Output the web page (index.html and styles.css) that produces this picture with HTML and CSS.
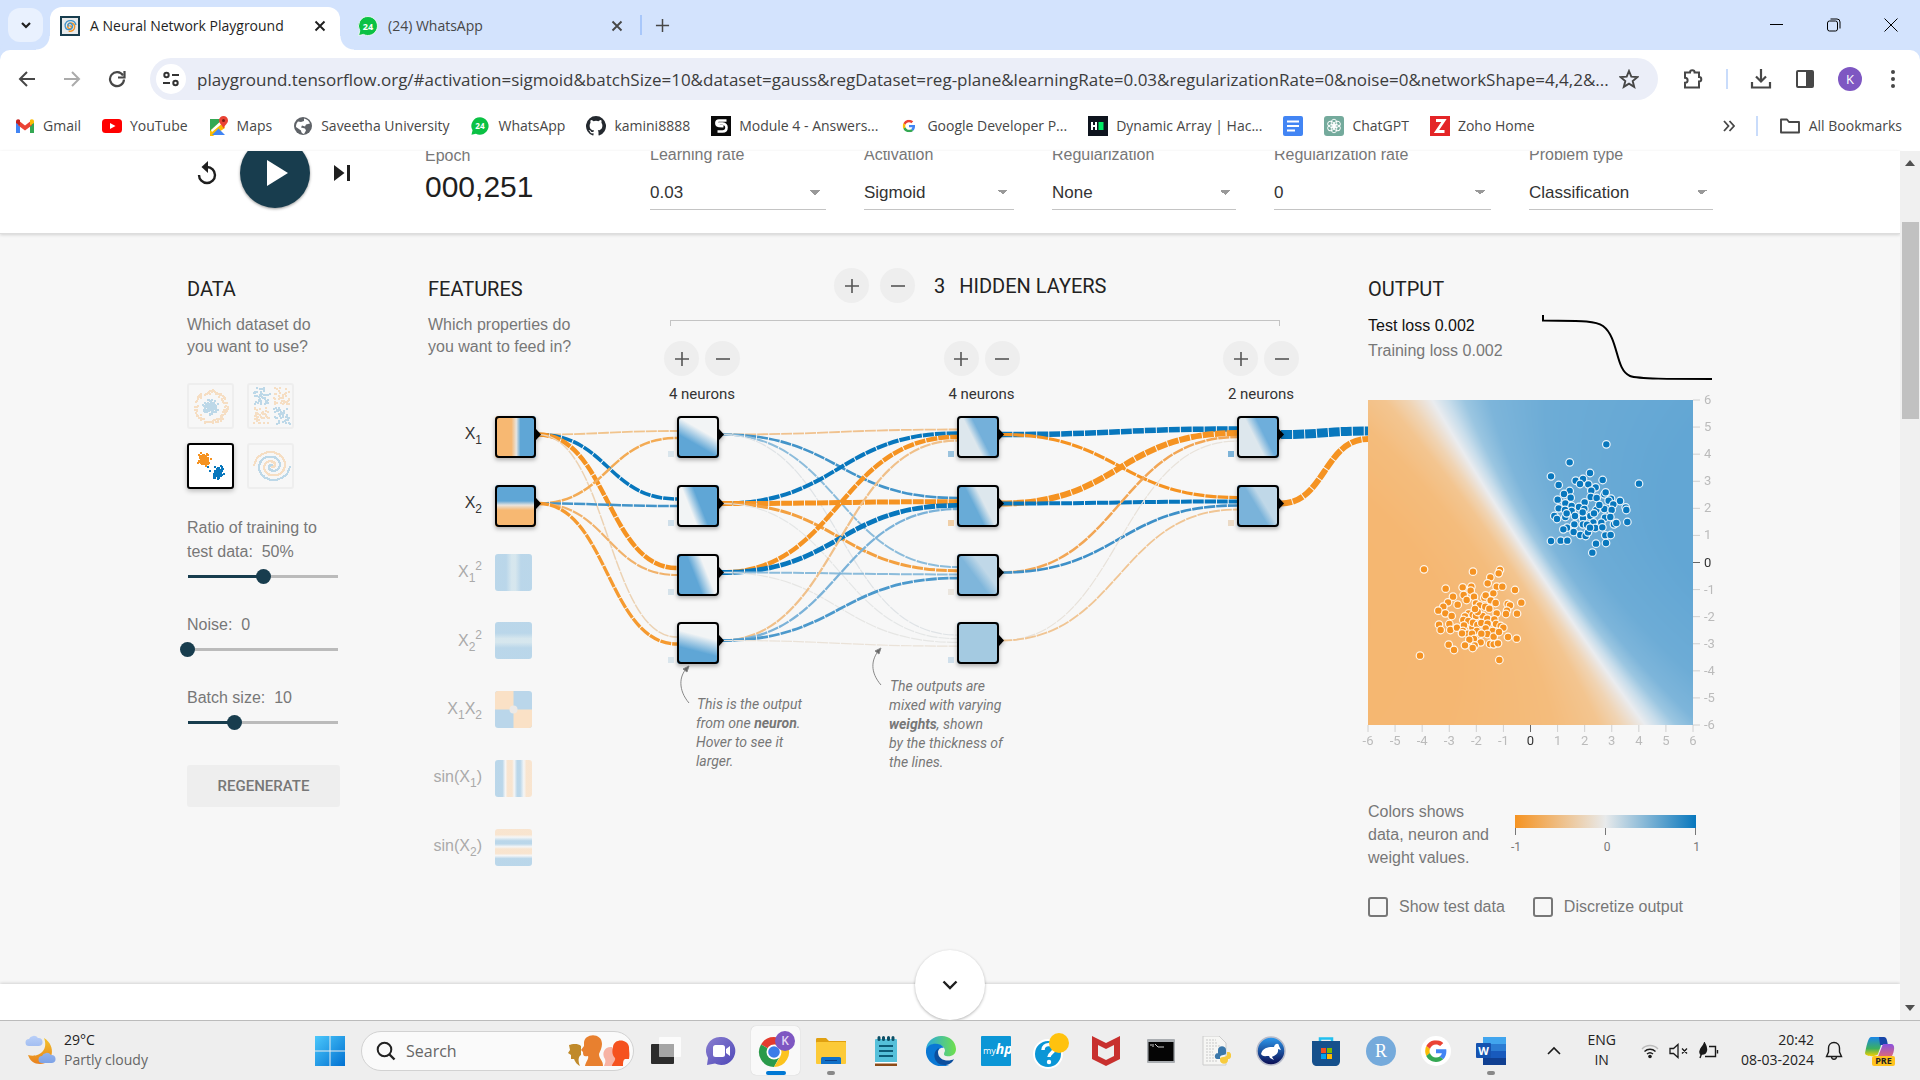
FILE: index.html
```html
<!DOCTYPE html>
<html lang="en">
<head>
<meta charset="utf-8">
<title>A Neural Network Playground</title>
<link rel="stylesheet" href="styles.css">
</head>
<body>
<svg class="defs" aria-hidden="true">
  <symbol id="i-close" viewBox="0 0 14 14"><path d="M2.500 2.500l9 9M11.500 2.500l-9 9" stroke="currentColor" stroke-width="1.900" fill="none"/></symbol>
  <symbol id="i-plus" viewBox="0 0 16 16"><path d="M8 1v14M1 8h14" stroke="currentColor" stroke-width="1.600" fill="none"/></symbol>
  <symbol id="i-minus" viewBox="0 0 16 16"><path d="M1 8h14" stroke="currentColor" stroke-width="1.600" fill="none"/></symbol>
  <symbol id="i-google" viewBox="0 0 48 48"><path fill="#ea4335" d="M24 9.500c3.500 0 6.700 1.200 9.200 3.600l6.900-6.900A24 24 0 0 0 2.600 13.200l8 6.200C12.400 13.700 17.700 9.500 24 9.500z"/><path fill="#4285f4" d="M47 24.600c0-1.600-.2-3.100-.4-4.600H24v9h12.900c-.6 3-2.300 5.500-4.800 7.200l7.700 6C44.400 38 47 31.800 47 24.600z"/><path fill="#fbbc05" d="M10.500 28.600a14.500 14.500 0 0 1 0-9.200l-8-6.200a24 24 0 0 0 0 21.600z"/><path fill="#34a853" d="M24 48c6.500 0 11.900-2.100 15.900-5.800l-7.700-6c-2.200 1.500-4.900 2.300-8.200 2.300-6.300 0-11.600-4.200-13.500-9.900l-8 6.200C6.500 42.600 14.600 48 24 48z"/></symbol>
</svg>

<header class="browser">
  <div class="tabstrip">
    <button class="tab-search" aria-label="Search tabs"><svg width="12" height="12" viewBox="0 0 12 12"><path d="M2 4l4 4 4-4" fill="none" stroke="#1f1f1f" stroke-width="2.200"/></svg></button>
    <div class="tab tab-active">
      <svg width="20" height="20" viewBox="0 0 20 20"><rect width="20" height="20" fill="#183d4e"/><rect x="2" y="2" width="16" height="16" fill="#e8eaeb"/><path d="M10 10.500c1-1.500 2.500.5 1 1.700-1.800 1.400-4.300-.8-3-3.400 1.600-3 6.500-2 6.700 1.700.2 3.500-3 5.500-6 4.500" fill="none" stroke="#f59322" stroke-width="1.400"/><path d="M9.500 9.500c-1 1.500-2.500-.5-1-1.700 1.800-1.400 4.800.5 4 3.400-1 3.400-6.500 3.300-7.300-.7-.7-4 2.800-6.500 6.300-5.800 2.500.5 4 2.300 4.500 4.300" fill="none" stroke="#4394c9" stroke-width="1.300"/></svg>
      <span class="tab-title">A Neural Network Playground</span>
      <button class="tab-close" aria-label="Close tab"><svg width="14" height="14"><use href="#i-close"/></svg></button>
    </div>
    <div class="tab">
      <svg width="20" height="20" viewBox="0 0 20 20"><path d="M10 .5a9.500 9.500 0 1 1-4.500 17.900L.6 19.600l1.200-4.800A9.500 9.500 0 0 1 10 .5z" fill="#0bc144" stroke="#fff" stroke-width=".8"/><text x="10" y="13.500" text-anchor="middle" class="wa-count">24</text></svg>
      <span class="tab-title">(24) WhatsApp</span>
      <button class="tab-close" aria-label="Close tab"><svg width="14" height="14"><use href="#i-close"/></svg></button>
    </div>
    <span class="divider divider-tab"></span>
    <button class="new-tab" aria-label="New tab"><svg width="15" height="15"><use href="#i-plus"/></svg></button>
    <div class="window-controls">
      <button aria-label="Minimize"><svg width="14" height="14" viewBox="0 0 14 14"><path d="M0 6.500h13" stroke="#000"/></svg></button>
      <button aria-label="Restore"><svg width="14" height="14" viewBox="0 0 14 14"><rect x=".5" y="3" width="10" height="10" rx="2" fill="none" stroke="#000"/><path d="M3.500 1h6.500a3 3 0 0 1 3 3v6.500" fill="none" stroke="#000"/></svg></button>
      <button aria-label="Close"><svg width="14" height="14" viewBox="0 0 14 14"><path d="M.5.5l13 13M13.500.5l-13 13" stroke="#000"/></svg></button>
    </div>
  </div>

  <div class="toolbar">
    <div class="nav">
      <button aria-label="Back"><svg width="18" height="18" viewBox="0 0 18 18"><path d="M17 9H2.500M9 2L2 9l7 7" fill="none" stroke="#474747" stroke-width="2"/></svg></button>
      <button aria-label="Forward"><svg width="18" height="18" viewBox="0 0 18 18"><path d="M1 9h14.500M9 2l7 7-7 7" fill="none" stroke="#ababab" stroke-width="2"/></svg></button>
      <button aria-label="Reload"><svg width="18" height="18" viewBox="0 0 18 18"><path d="M15 5.500A7 7 0 1 0 16 9.500" fill="none" stroke="#474747" stroke-width="2.200"/><path d="M16.500 1v6.500H10" fill="none" stroke="#474747" stroke-width="2.200"/></svg></button>
    </div>
    <div class="omnibox">
      <span class="site-info"><svg width="18" height="18" viewBox="0 0 18 18" fill="none" stroke="#333" stroke-width="2"><circle cx="4.500" cy="5" r="2.200"/><path d="M10 5h7M1 13h7"/><circle cx="13.500" cy="13" r="2.200"/></svg></span>
      <input class="url" aria-label="Address" value="playground.tensorflow.org/#activation=sigmoid&amp;batchSize=10&amp;dataset=gauss&amp;regDataset=reg-plane&amp;learningRate=0.03&amp;regularizationRate=0&amp;noise=0&amp;networkShape=4,4,2&amp;...">
      <svg width="20" height="20" viewBox="0 0 20 20"><path d="M10 2l2.300 5.600 6 .5-4.600 3.900 1.500 5.900L10 14.700l-5.200 3.200L6.300 12 1.700 8.100l6-.5z" fill="none" stroke="#474747" stroke-width="1.900"/></svg>
    </div>
    <div class="actions">
      <svg width="22" height="22" viewBox="0 0 22 22"><path d="M3 4.500h5a2.300 2.300 0 0 1 4.600 0H17V9a2.300 2.300 0 0 1 0 4.600V19.500H3v-4.800c3.500 0 3.500-5 0-5z" fill="none" stroke="#474747" stroke-width="2"/></svg>
      <span class="divider"></span>
      <svg width="22" height="22" viewBox="0 0 22 22"><path d="M11 1v12M6 8.500l5 5 5-5M2 14v5.500h18V14" fill="none" stroke="#474747" stroke-width="2.200"/></svg>
      <svg width="22" height="20" viewBox="0 0 22 20"><rect x="3" y="2" width="16" height="16" rx="1" fill="none" stroke="#474747" stroke-width="2"/><path d="M12 2h7v16h-7z" fill="#474747"/></svg>
      <span class="avatar">K</span>
      <svg width="6" height="20" viewBox="0 0 6 20" fill="#474747"><circle cx="3" cy="3" r="2"/><circle cx="3" cy="10" r="2"/><circle cx="3" cy="17" r="2"/></svg>
    </div>
  </div>

  <nav class="bookmarks">
    <a href="#"><svg width="20" height="20" viewBox="0 0 20 20"><path fill="#4285f4" d="M1 17V6l4 3v8z"/><path fill="#34a853" d="M15 17V9l4-3v11z"/><path fill="#ea4335" d="M3 4l7 5.500L17 4v5.200l-7 5.300-7-5.300z"/><path fill="#c5221f" d="M1 5.500C1 3 3.500 2.500 5 4v5.500L1 7z"/><path fill="#fbbc04" d="M19 5.500C19 3 16.500 2.500 15 4v5.500L19 7z"/></svg>Gmail</a>
    <a href="#"><svg width="20" height="20" viewBox="0 0 20 20"><rect y="3" width="20" height="14" rx="3.500" fill="#f00"/><path d="M8 7l5.500 3L8 13z" fill="#fff"/></svg>YouTube</a>
    <a href="#"><svg width="20" height="20" viewBox="0 0 20 20"><path fill="#34a853" d="M1 3h11v8l-6 7H1z"/><path fill="#fbbc04" d="M1 15L13 4l3 8-3 2L4 20H1z"/><path fill="#fff" d="M2 14L13 4l2 2L3 16z"/><path fill="#4285f4" d="M3 19l6.500-6.500L16 19z"/><path fill="#ea4335" d="M14.500 0a4.500 4.500 0 0 1 4.500 4.500c0 3-3 4-4.500 8-1.500-4-4.500-5-4.500-8A4.500 4.500 0 0 1 14.500 0z"/><circle cx="14.500" cy="4.500" r="1.500" fill="#7d1e16"/></svg>Maps</a>
    <a href="#"><svg width="20" height="20" viewBox="0 0 20 20"><circle cx="10" cy="10" r="9" fill="#5f6368"/><path fill="#fff" d="M11 2.500c3 .5 5 2.500 6 5l-4 1-1 2-3-1-1 2 4 1 1 2-2 3.500c-2-.5-3-2-3-3.500L3 11c0-2 .5-4 2-5.500l3 .5 3-1z"/></svg>Saveetha University</a>
    <a href="#"><svg width="20" height="20" viewBox="-1 -1 22 22"><path d="M10 .5a9.500 9.500 0 1 1-4.500 17.900L.6 19.600l1.200-4.800A9.500 9.500 0 0 1 10 .5z" fill="#0bc144"/><text x="10" y="13.500" text-anchor="middle" class="wa-count">24</text></svg>WhatsApp</a>
    <a href="#"><svg width="20" height="20" viewBox="0 0 16 16"><path fill="#24292f" d="M8 0a8 8 0 0 0-2.500 15.600c.4.100.5-.2.500-.4v-1.400c-2.200.5-2.700-1-2.700-1-.4-.9-.9-1.200-.9-1.200-.7-.5.100-.5.100-.5.800.1 1.200.8 1.200.8.700 1.300 1.900.9 2.300.7.100-.5.300-.9.500-1.100-1.800-.2-3.600-.9-3.600-4 0-.9.300-1.600.8-2.100-.1-.2-.4-1 .1-2.100 0 0 .7-.2 2.200.8a7.500 7.500 0 0 1 4 0c1.500-1 2.200-.8 2.200-.8.400 1.100.2 1.900.1 2.100.5.600.8 1.300.8 2.100 0 3.100-1.900 3.800-3.700 4 .3.300.6.800.6 1.500v2.200c0 .2.100.5.500.4A8 8 0 0 0 8 0z"/></svg>kamini8888</a>
    <a href="#"><svg width="20" height="20" viewBox="0 0 20 20"><rect width="20" height="20" fill="#0a0a0a"/><path d="M15.500 4.500H8C4.500 4.500 4.500 9.500 8 10l4.500.3M7.500 9.500V7.500h4c3.500.5 4 2.500 4 4 0 2.500-1.500 4-4 4H6.500" fill="none" stroke="#fff" stroke-width="2.600"/></svg>Module 4 - Answers...</a>
    <a href="#"><svg width="20" height="20" viewBox="-14 -14 76 76"><use href="#i-google" width="48" height="48"/></svg>Google Developer P...</a>
    <a href="#"><svg width="20" height="20" viewBox="0 0 20 20"><rect width="20" height="20" fill="#0e141e"/><path d="M4 6v8M8 6v8M4 10h4" stroke="#fff" stroke-width="2"/><rect x="10.500" y="6" width="5" height="8" fill="#00ea64"/></svg>Dynamic Array | Hac...</a>
    <a href="#" aria-label="Google Docs"><svg width="20" height="20" viewBox="0 0 20 20"><rect width="20" height="20" rx="2" fill="#4285f4"/><path d="M4 5.500h12M4 10h12M4 14.500h8" stroke="#fff" stroke-width="1.800"/></svg></a>
    <a href="#"><svg width="20" height="20" viewBox="0 0 20 20"><rect width="20" height="20" rx="3" fill="#74aa9c"/><g fill="none" stroke="#fff" stroke-width=".9"><ellipse cx="10" cy="7" rx="2.800" ry="3.800"/><ellipse cx="10" cy="7" rx="2.800" ry="3.800" transform="rotate(60 10 10)"/><ellipse cx="10" cy="7" rx="2.800" ry="3.800" transform="rotate(120 10 10)"/><ellipse cx="10" cy="7" rx="2.800" ry="3.800" transform="rotate(180 10 10)"/><ellipse cx="10" cy="7" rx="2.800" ry="3.800" transform="rotate(240 10 10)"/><ellipse cx="10" cy="7" rx="2.800" ry="3.800" transform="rotate(300 10 10)"/></g></svg>ChatGPT</a>
    <a href="#"><svg width="20" height="20" viewBox="0 0 20 20"><rect width="20" height="20" fill="#e42527"/><path d="M6 4.500h8L6.500 15.500h8" fill="none" stroke="#fff" stroke-width="2.800"/></svg>Zoho Home</a>
    <div class="bookmarks-end">
      <svg width="12" height="12" viewBox="0 0 12 12"><path d="M1 1l4.500 5L1 11M6.500 1L11 6l-4.500 5" fill="none" stroke="#474747" stroke-width="1.800"/></svg>
      <span class="divider"></span>
      <a href="#"><svg width="22" height="20" viewBox="0 0 22 20"><path d="M2 16.500V3.500h6l2 2.500h10v10.500z" fill="none" stroke="#474747" stroke-width="1.900" stroke-linejoin="round"/></svg>All Bookmarks</a>
    </div>
  </nav>
</header>

<div class="viewport">
  <main class="page">
    <section class="top-controls">
      <div class="wrap controls">
        <div class="timeline">
          <button aria-label="Reset"><svg width="22" height="26" viewBox="0 0 22 26"><path d="M3 15a8 8 0 1 0 8-8" fill="none" stroke="#1f1f1f" stroke-width="2.400"/><path d="M12 1v12L5.500 7z" fill="#1f1f1f"/></svg></button>
          <button class="play" aria-label="Run"><svg width="24" height="28" viewBox="0 0 24 28"><path d="M2 1l21 13L2 27z" fill="#fff"/></svg></button>
          <button aria-label="Step"><svg width="16" height="16" viewBox="0 0 16 16"><path d="M0 0l10.500 8L0 16zM13 0h3v16h-3z" fill="#1f1f1f"/></svg></button>
        </div>
        <div class="epoch"><span class="label">Epoch</span><span class="epoch-value">000,251</span></div>
        <div class="fields">
          <label class="field f1"><span class="label">Learning rate</span><select><option>0.03</option></select></label>
          <label class="field f2"><span class="label">Activation</span><select><option>Sigmoid</option></select></label>
          <label class="field f3"><span class="label">Regularization</span><select><option>None</option></select></label>
          <label class="field f4"><span class="label">Regularization rate</span><select><option>0</option></select></label>
          <label class="field f5"><span class="label">Problem type</span><select><option>Classification</option></select></label>
        </div>
      </div>
    </section>

    <section class="wrap playground">
      <div class="data">
        <h4>Data</h4>
        <p>Which dataset do<br>you want to use?</p>
        <div class="datasets">
          <button aria-label="Circle"><svg id="ds-circle" viewBox="0 0 43 42"></svg></button>
          <button aria-label="Exclusive or"><svg id="ds-xor" viewBox="0 0 43 42"></svg></button>
          <button class="selected" aria-label="Gaussian"><svg id="ds-gauss" viewBox="0 0 43 42"></svg></button>
          <button aria-label="Spiral"><svg id="ds-spiral" viewBox="0 0 43 42"></svg></button>
        </div>
        <div class="slider"><label for="ratio">Ratio of training to<br>test data:&nbsp; 50%</label><input id="ratio" type="range" min="0" max="100" value="50" style="--fill:50%"></div>
        <div class="slider"><label for="noise">Noise:&nbsp; 0</label><input id="noise" type="range" min="0" max="50" value="0" style="--fill:0%"></div>
        <div class="slider"><label for="batch">Batch size:&nbsp; 10</label><input id="batch" type="range" min="1" max="30" value="10" style="--fill:31%"></div>
        <button class="regenerate">Regenerate</button>
      </div>

      <div class="network">
        <div class="network-head">
          <div class="features">
            <h4>Features</h4>
            <p>Which properties do<br>you want to feed in?</p>
          </div>
          <div class="layers">
            <div class="layers-title">
              <button class="round" aria-label="Add layer"><svg width="16" height="16"><use href="#i-plus"/></svg></button>
              <button class="round" aria-label="Remove layer"><svg width="16" height="16"><use href="#i-minus"/></svg></button>
              <span class="count">3</span><h4>Hidden layers</h4>
            </div>
            <div class="bracket"></div>
            <div class="layer-row">
              <div class="layer"><button class="round" aria-label="Add neuron"><svg width="16" height="16"><use href="#i-plus"/></svg></button><button class="round" aria-label="Remove neuron"><svg width="16" height="16"><use href="#i-minus"/></svg></button><span>4 neurons</span></div>
              <div class="layer"><button class="round" aria-label="Add neuron"><svg width="16" height="16"><use href="#i-plus"/></svg></button><button class="round" aria-label="Remove neuron"><svg width="16" height="16"><use href="#i-minus"/></svg></button><span>4 neurons</span></div>
              <div class="layer"><button class="round" aria-label="Add neuron"><svg width="16" height="16"><use href="#i-plus"/></svg></button><button class="round" aria-label="Remove neuron"><svg width="16" height="16"><use href="#i-minus"/></svg></button><span>2 neurons</span></div>
            </div>
          </div>
        </div>
        <svg class="diagram" id="diagram" viewBox="428 404 940 475">
          <g class="callout">
            <path d="M689 703C678 690 679 676 687 668" /><path class="tip" d="M689 666l-6 3 4 3z"/>
            <text x="697" y="709">This is the output</text><text x="696" y="728">from one <tspan class="b">neuron</tspan>.</text><text x="696" y="747">Hover to see it</text><text x="696" y="766">larger.</text>
            <path d="M881 685C870 672 871 660 879 650" /><path class="tip" d="M881 648l-6 3 4 3z"/>
            <text x="890" y="691">The outputs are</text><text x="889" y="710">mixed with varying</text><text x="889" y="729"><tspan class="b">weights</tspan>, shown</text><text x="889" y="748">by the thickness of</text><text x="889" y="767">the lines.</text>
          </g>
        </svg>
      </div>

      <div class="output">
        <h4>Output</h4>
        <div class="loss">
          <div><span class="test">Test loss 0.002</span><span>Training loss 0.002</span></div>
          <svg width="172" height="68" viewBox="0 0 172 68"><path d="M2 0v5.500C35 6 53 5 62 11 78 23 74 55 89 61c8 3 40 3 82 3" fill="none" stroke="#000" stroke-width="2"/></svg>
        </div>
        <div class="chart"><canvas id="heat" width="325" height="325"></canvas><svg id="plot" viewBox="0 0 345 350"></svg></div>
        <div class="legend">
          <p>Colors shows<br>data, neuron and<br>weight values.</p>
          <div class="scale"><div class="bar"></div><div class="marks"><i></i><i></i><i></i></div><div class="nums"><span>-1</span><span>0</span><span>1</span></div></div>
        </div>
        <div class="checks">
          <label><input type="checkbox">Show test data</label>
          <label><input type="checkbox">Discretize output</label>
        </div>
      </div>
    </section>

    <section class="article">
      <button class="more" aria-label="Scroll down"><svg width="16" height="10" viewBox="0 0 16 10"><path d="M1.500 1.500L8 8l6.500-6.500" fill="none" stroke="#1f1f1f" stroke-width="2.400"/></svg></button>
    </section>
  </main>
  <div class="scrollbar">
    <svg width="10" height="6" viewBox="0 0 10 6"><path d="M0 6l5-6 5 6z" fill="#505050"/></svg>
    <div class="thumb"></div>
    <svg width="10" height="6" viewBox="0 0 10 6"><path d="M0 0l5 6 5-6z" fill="#505050"/></svg>
  </div>
</div>

<footer class="taskbar">
  <div class="weather">
    <svg width="32" height="36" viewBox="0 0 32 36"><defs><linearGradient id="moon" x2="0" y2="1"><stop stop-color="#f3c32c"/><stop offset="1" stop-color="#e8801e"/></linearGradient><linearGradient id="cloud" x2="0" y2="1"><stop stop-color="#b9cff8"/><stop offset="1" stop-color="#7da2e6"/></linearGradient></defs><path d="M19 5c13 8 9 26-4 26-6 0-10-3-12-9 10 3 21-4 16-17z" fill="url(#moon)"/><path d="M4 13a3.500 3.500 0 0 1 0-7 5 4.500 0 0 1 9-1 4 4 0 0 1 1 8zM17 30a3.500 3.500 0 0 1 0-7 5 4.500 0 0 1 9-1 4 4 0 0 1 1 8z" fill="url(#cloud)"/></svg>
    <div><span>29°C</span><span class="muted">Partly cloudy</span></div>
  </div>
  <div class="apps">
    <button class="start" aria-label="Start"><svg width="30" height="30" viewBox="0 0 30 30"><defs><linearGradient id="win" x2="1" y2="1"><stop stop-color="#4cc8fb"/><stop offset="1" stop-color="#0070d1"/></linearGradient></defs><path d="M0 0h14.500v14.500H0zM15.500 0H30v14.500H15.500zM0 15.500h14.500V30H0zM15.500 15.500H30V30H15.500z" fill="url(#win)"/></svg></button>
    <div class="search">
      <svg width="20" height="20" viewBox="0 0 20 20"><circle cx="8.500" cy="8.500" r="6.800" fill="none" stroke="#222" stroke-width="2"/><path d="M13.500 13.500l5 5" stroke="#222" stroke-width="2.400"/></svg>
      <input aria-label="Search" placeholder="Search">
      <svg width="64" height="32" viewBox="0 0 64 32"><path d="M2 10c3-1 9-2 12 1v9c-3 2-3 6-1 11-4-2-5-5-6-7H4v-4l-3-2 2-3z" fill="#c08a2a"/><path d="M37 31c1-3 2-4 1-7-4-6 0-13 7-12l4 8-1 11z" fill="#f7b3a4"/><path d="M17 8c0-10 18-11 18 1 0 4-2 7-3 10 0 5 4 6 4 12H18c1-5 4-7 3-10-4 1-5 0-5-4l-2-2 3-4z" fill="#e8802f"/><path d="M46 12c1-9 15-8 16 0 0 5 1 7 0 12h-4c-2 1-2 3-2 7H45c0-3 4-5 3-8-3-3-3-7-2-11z" fill="#f5521f"/></svg>
    </div>
    <button class="app" aria-label="Task view"><svg width="30" height="30" viewBox="0 0 30 30"><rect y="8" width="23" height="20" rx="1" fill="#2c2c2c"/><rect x="8" y="1" width="22" height="20" rx="1" fill="#fff" opacity=".78"/><rect x="8" y="8" width="15" height="13" fill="#8d8d8d" opacity=".65"/></svg></button>
    <button class="app" aria-label="Chat"><svg width="30" height="30" viewBox="0 0 30 30"><defs><linearGradient id="chat" x2="1" y2="1"><stop stop-color="#8a7fd0"/><stop offset="1" stop-color="#4f48b8"/></linearGradient></defs><path d="M15 1a14 14 0 1 1-6 26.500L1 29l1-7A14 14 0 0 1 15 1z" fill="url(#chat)"/><rect x="7" y="9" width="12" height="12" rx="2.500" fill="#fff"/><path d="M20 13l4-3v10l-4-3z" fill="#fff"/></svg></button>
    <button class="app active" aria-label="Chrome"><svg width="38" height="40" viewBox="0 0 38 40"><path d="M17 24L4 16.500a15 15 0 0 1 26 0z" fill="#e33b2e"/><path d="M17 24L4 16.500A15 15 0 0 0 17 39l6-11z" fill="#2a9a4a"/><path d="M17 24l0-7.500h13A15 15 0 0 1 17 39l6.500-11z" fill="#fcc31e"/><circle cx="17" cy="24" r="7.500" fill="#fff"/><circle cx="17" cy="24" r="5.800" fill="#3b7de8"/><circle cx="28" cy="13" r="10" fill="#7e57c2"/><text x="28" y="17" text-anchor="middle" class="badge-k">K</text></svg></button>
    <button class="app running" aria-label="File Explorer"><svg width="30" height="30" viewBox="0 0 30 30"><path d="M0 3c0-1 1-1 2-1h8l3 3h17v5H0z" fill="#e0a010"/><rect y="6" width="30" height="22" rx="1" fill="#fcca38"/><path d="M5 28v-5c0-2 1-2 2-2h16c2 0 2 1 2 2v5z" fill="#0f70c8"/><path d="M9 24.500h12" stroke="#0a3f87"/></svg></button>
    <button class="app" aria-label="Notepad"><svg width="30" height="30" viewBox="0 0 30 30"><rect x="4" y="3" width="22" height="25" rx="1" fill="#55c0da"/><path d="M4 27h22v3H4z" fill="#8b4a17"/><path d="M4 26h22v1.500H4z" fill="#fff"/><path d="M8 10h14M8 15h14M8 20h14" stroke="#0d5c78" stroke-width="2"/><path d="M8 1.500v2M12.500 1.500v2M17.500 1.500v2M22 1.500v2" stroke="#0d4f66" stroke-width="3" stroke-linecap="round"/></svg></button>
    <button class="app" aria-label="Edge"><svg width="30" height="30" viewBox="0 0 30 30"><defs><linearGradient id="edge" x2="1"><stop stop-color="#2aa8e0"/><stop offset="1" stop-color="#6fe04a"/></linearGradient></defs><path d="M0 14C1-4 29-5 30 13c0 6-5 8-10 7-3-1-2-3-1-5 0-8-15-9-19-1z" fill="url(#edge)"/><path d="M0 14c2-8 15-8 18-2-5-1-8 4-6 9 2 7 8 9 12 8C10 34-1 25 0 14z" fill="#0a78d4"/><path d="M13 12c-8 4-5 17 5 17 5 0 8-2 10-6-5 3-16 2-16-7 0-2 1-3 1-4z" fill="#0c4f9e"/></svg></button>
    <button class="app" aria-label="myHP"><svg width="30" height="30" viewBox="0 0 30 30"><rect width="30" height="30" rx="1" fill="#0b96d6"/><text x="2" y="18" class="myhp">my<tspan class="hp">hp</tspan></text></svg></button>
    <button class="app" aria-label="Help"><svg width="36" height="40" viewBox="0 0 36 40"><circle cx="15" cy="23" r="14" fill="#0b96d6" stroke="#fff" stroke-width="2"/><path d="M10 19c0-7 11-7 11-1 0 4-5 4-5 8" fill="none" stroke="#fff" stroke-width="3.500"/><circle cx="16" cy="31" r="2.200" fill="#fff"/><circle cx="26" cy="12" r="10" fill="#ffc20e"/></svg></button>
    <button class="app" aria-label="McAfee"><svg width="28" height="30" viewBox="0 0 28 30"><path d="M0 0l14 7 14-7v23l-14 7-14-7zM6 9v11l8 4 8-4V9l-8 4z" fill="#c8302e" fill-rule="evenodd"/></svg></button>
    <button class="app" aria-label="Command Prompt"><svg width="28" height="24" viewBox="0 0 28 24"><rect width="28" height="24" rx="1" fill="#a9adb1"/><rect x="1.500" y="3" width="25" height="19" fill="#050505"/><path d="M3 6h2M6 5v3M8 5l3 3M11 8h6" stroke="#ccc"/></svg></button>
    <button class="app" aria-label="Python"><svg width="30" height="30" viewBox="0 0 30 30"><path d="M2 0h16l7 7v22H2z" fill="#f6f6f4" stroke="#ccc"/><path d="M5 4h10M5 7h12M5 10h14M5 13h9M5 16h7M5 19h8M5 22h8M5 25h12" stroke="#c9c9c9" stroke-dasharray="2 1"/><path d="M17 20v-6c0-5 8-5 8 0v3c0 3-5 1-6 4v2h-3c-3 0-3-6 1-6" fill="#3c78aa"/><path d="M26 16h2c3 1 3 7-1 7v1c0 5-8 5-8 0v-1c0-3 6-1 7-4z" fill="#f7cb3e"/></svg></button>
    <button class="app" aria-label="Weka"><svg width="30" height="30" viewBox="0 0 30 30"><defs><linearGradient id="weka" x2="0" y2="1"><stop stop-color="#2d9bf0"/><stop offset="1" stop-color="#0a0a50"/></linearGradient></defs><circle cx="15" cy="15" r="14" fill="url(#weka)" stroke="#b8bccb" stroke-width="1.500"/><path d="M5 18c2-7 8-7 13-7 1-4 5-4 5-1l2 4-3-1c1 6-5 7-6 8l2 3-4-2-1-2c-4 0-6 1-8-2z" fill="#fff"/></svg></button>
    <button class="app" aria-label="Store"><svg width="30" height="30" viewBox="0 0 30 30"><path d="M9 6V2.500h12V6" fill="none" stroke="#22c0f0" stroke-width="2.500"/><path d="M1 5h28v20c0 3-2 5-5 5H6c-3 0-5-2-5-5z" fill="#15508c"/><path d="M10 12h5v5h-5z" fill="#f25022"/><path d="M16 12h5v5h-5z" fill="#7fba00"/><path d="M10 18h5v5h-5z" fill="#00a4ef"/><path d="M16 18h5v5h-5z" fill="#ffb900"/></svg></button>
    <button class="app" aria-label="RStudio"><svg width="30" height="30" viewBox="0 0 30 30"><circle cx="15" cy="15" r="15" fill="#75aadb"/><text x="15" y="21" text-anchor="middle" class="rs">R</text></svg></button>
    <button class="app" aria-label="Google"><svg width="30" height="30" viewBox="-16 -16 80 80"><circle cx="24" cy="24" r="40" fill="#fff"/><use href="#i-google" x="-5" y="-5" width="58" height="58"/></svg></button>
    <button class="app running" aria-label="Word"><svg width="30" height="30" viewBox="0 0 30 30"><path d="M7 1h23v7H7z" fill="#41a5ee"/><path d="M7 8h23v7H7z" fill="#2b7cd3"/><path d="M7 15h23v7H7z" fill="#185abd"/><path d="M7 22h23v7H7z" fill="#103f91"/><rect y="7" width="15" height="15" rx="1" fill="#1653b0"/><text x="7.500" y="18.500" text-anchor="middle" class="word">W</text></svg></button>
  </div>
  <div class="tray">
    <svg width="14" height="9" viewBox="0 0 14 9"><path d="M1 8l6-6 6 6" fill="none" stroke="#1a1a1a" stroke-width="1.600"/></svg>
    <div class="lang"><span>ENG</span><span>IN</span></div>
    <div class="status">
      <svg width="18" height="16" viewBox="0 0 18 16" fill="none" stroke-width="1.400"><path d="M1 6a11 11 0 0 1 16 0" stroke="#bbb"/><path d="M3.500 8.500a8 8 0 0 1 11 0M6 11a4.500 4.500 0 0 1 6 0" stroke="#1a1a1a"/><circle cx="9" cy="13.500" r="1.800" fill="#1a1a1a"/></svg>
      <svg width="20" height="16" viewBox="0 0 20 16" fill="none" stroke="#1a1a1a" stroke-width="1.300"><path d="M1 5.500h3.500L9 1.500v13l-4.500-4H1zM13 5.500l5 5M18 5.500l-5 5"/></svg>
      <svg width="20" height="18" viewBox="0 0 20 18" fill="none" stroke="#1a1a1a" stroke-width="1.400"><path d="M10 4.500h6.500v10H6M18.500 8v3.500"/><path d="M1.500 12C-1 7 4 6 5.500 1c3 5 3 11-2.500 11z" fill="#1a1a1a"/><path d="M4 8c-1 3-2 5-3 8"/></svg>
    </div>
    <div class="clock"><span>20:42</span><span>08-03-2024</span></div>
    <svg width="18" height="20" viewBox="0 0 18 20"><path d="M9 1.500c-3.500 0-5.500 2.500-5.500 5.500v4L1.500 15.500h15L14.500 11V7c0-3-2-5.500-5.500-5.500zM6.500 16c.5 3 4.500 3 5 0" fill="none" stroke="#1a1a1a" stroke-width="1.400"/></svg>
    <svg class="copilot" width="30" height="30" viewBox="0 0 30 30"><defs><linearGradient id="cpa" x2="0" y2="1"><stop stop-color="#1a86e8"/><stop offset=".6" stop-color="#3cb060"/><stop offset="1" stop-color="#f5d000"/></linearGradient><linearGradient id="cpb" x2="0" y2="1"><stop stop-color="#8a50e0"/><stop offset="1" stop-color="#f07060"/></linearGradient></defs><path d="M6 1h13l-6 17c-1 3-13 3-13-1C1 12 3 1 6 1z" fill="url(#cpa)"/><path d="M14 1h5c3 0 3 4 4 8h-8z" fill="#1846a8"/><path d="M18 8h8c5 0 3 8 1 12-2 4-8 4-15 3z" fill="url(#cpb)"/><rect x="7" y="20" width="23" height="10" rx="2" fill="#ffc31f"/><text x="18.500" y="28" text-anchor="middle" class="pre">PRE</text></svg>
  </div>
</footer>
<script src="script.js"></script>
</body>
</html>
```
FILE: styles.css
```css
* { box-sizing: border-box; }
body { margin: 0; min-height: 100vh; display: flex; flex-direction: column; font-family: "Liberation Sans", Arial, sans-serif; font-size: 16px; color: #777; background: #fff; overflow-x: hidden; }
button { border: 0; background: none; padding: 0; font: inherit; color: inherit; display: inline-flex; align-items: center; justify-content: center; }
a { color: inherit; text-decoration: none; }
h4, p { margin: 0; font-weight: 400; }
svg { flex: none; display: block; }
.defs { position: absolute; width: 0; height: 0; }

/* browser frame */
.browser, .taskbar { font-family: "Open Sans", "Noto Sans", sans-serif; color: #474747; }
.tabstrip { display: flex; align-items: center; height: 50px; padding: 0 8px; background: #d3e3fd; }
.tab-search { width: 35px; height: 34px; border-radius: 12px; background: #e9f1fe; margin-right: 7px; }
.tab { position: relative; display: flex; align-items: center; gap: 10px; width: 296px; height: 43px; padding: 0 12px 6px 18px; align-self: flex-end; font-size: 14px; }
.tab-active { width: 290px; padding: 0 13px 6px 10px; background: #fff; border-radius: 12px 12px 0 0; color: #1f1f1f; }
.tab-active::before, .tab-active::after { content: ""; position: absolute; bottom: 0; width: 14px; height: 14px; }
.tab-active::before { right: 100%; background: radial-gradient(circle at 0 0, transparent 13px, #fff 14px); }
.tab-active::after { left: 100%; background: radial-gradient(circle at 100% 0, transparent 13px, #fff 14px); }
.tab-title { flex: 1; white-space: nowrap; }
.divider { width: 2px; height: 20px; background: #c9dcfb; }
.divider-tab { background: #a8c7fa; margin-left: 4px; }
.new-tab { margin-left: 13px; }
.window-controls { display: flex; margin-left: auto; gap: 43px; padding-right: 14px; }
.toolbar { display: flex; align-items: center; height: 58px; padding-right: 24px; background: #fff; border-radius: 10px 10px 0 0; box-shadow: 0 -10px 0 #d3e3fd; }
.nav { display: flex; gap: 27px; padding: 0 24px 0 18px; }
.omnibox { flex: 1; display: flex; align-items: center; height: 42px; padding: 0 19px 0 6px; border-radius: 21px; background: #ebeef8; }
.site-info { display: flex; align-items: center; justify-content: center; width: 30px; height: 30px; border-radius: 50%; background: #fff; margin-right: 11px; }
.url { flex: 1; min-width: 0; border: 0; padding: 0; background: none; font: 17px "Open Sans", "Noto Sans", sans-serif; color: #3c3c3c; }
.actions { display: flex; align-items: center; gap: 22px; padding-left: 24px; }
.avatar { width: 24px; height: 24px; border-radius: 50%; background: #7e57c2; color: #fff; font-size: 13px; line-height: 24px; text-align: center; margin-right: 6px; }
.bookmarks { display: flex; align-items: center; gap: 21px; height: 43px; padding: 0 18px 8px 15px; background: #fff; font-size: 14px; white-space: nowrap; }
.bookmarks a { display: flex; align-items: center; gap: 8px; }
.bookmarks-end { display: flex; align-items: center; gap: 21px; margin-left: auto; }
.wa-count { font: bold 9px "Open Sans", sans-serif; fill: #fff; }

/* viewport */
.viewport { flex: 1; display: flex; min-height: 0; }
.page { flex: 1; min-width: 0; display: flex; flex-direction: column; background: #f7f7f7; }
.scrollbar { width: 20px; display: flex; flex-direction: column; align-items: center; padding: 9px 0; background: #f0f0f0; }
.thumb { width: 17px; height: 197px; margin-top: 56px; margin-bottom: auto; background: #c1c1c1; }
.wrap { width: 100%; max-width: 1526px; margin: 0 auto; }

.top-controls { height: 83px; overflow: hidden; background: #fff; border-bottom: 1px solid #ddd; box-shadow: 0 1px 3px rgba(0,0,0,.15); display: flex; align-items: flex-end; }
.controls { display: grid; grid-template-columns: 238px 225px 1fr; align-items: end; padding-bottom: 23px; }
.timeline { display: flex; align-items: center; gap: 22px; padding-left: 9px; margin-bottom: 2px; }
.timeline .play + button { margin-left: 2px; }
.play { width: 70px; height: 70px; border-radius: 50%; background: #183d4e; box-shadow: 0 1px 3px rgba(0,0,0,.4); }
.play svg { margin-left: 4px; }
.label { display: block; line-height: 20px; color: #777; }
.epoch { padding-bottom: 6px; }
.epoch-value { display: block; margin-top: 4px; font-size: 30px; line-height: 34px; color: #1f1f1f; }
.fields { display: flex; gap: 38px; }
.field { flex: 1 1 0; min-width: 0; }
.f1 { flex-grow: 176; } .f2 { flex-grow: 150; } .f3 { flex-grow: 184; } .f4 { flex-grow: 217; } .f5 { flex-grow: 184; }
.field select { appearance: none; display: block; width: 100%; height: 34px; margin-top: 11px; padding: 0; border: 0; border-bottom: 1px solid #c4c4c4; border-radius: 0; background: linear-gradient(to top right, transparent 50%, #999 50%) right 11px center / 5px 5px no-repeat, linear-gradient(to top left, transparent 50%, #999 50%) right 6px center / 5px 5px no-repeat; font: 17px "Liberation Sans", Arial, sans-serif; color: #333; }

/* playground */
.playground { flex: 1; display: grid; grid-template-columns: 153px 1fr 345px; padding-top: 41px; align-items: start; }
h4 { font-family: Roboto, sans-serif; font-size: 20px; line-height: 28px; color: #222; text-transform: uppercase; }
.data p, .features p { margin-top: 11px; line-height: 22px; white-space: nowrap; }
.datasets { display: grid; grid-template-columns: 47px 47px; gap: 14px 13px; margin-top: 25px; }
.datasets button { height: 46px; border: 2px solid #eee; border-radius: 3px; }
.datasets button svg { width: 43px; height: 42px; opacity: .24; }
.datasets .selected { border-color: #000; background: #fff; box-shadow: 0 2px 5px rgba(0,0,0,.25); }
.datasets .selected svg { opacity: 1; }
.slider { margin-top: 25px; display: flex; flex-direction: column; }
.slider label { line-height: 24px; white-space: nowrap; }
.datasets + .slider { margin-top: 27px; }
.slider input { appearance: none; height: 24px; width: calc(100% + 13px); margin: 0 -7px; background: linear-gradient(90deg, #183d4e var(--fill), #bbb var(--fill)) center / calc(100% - 16px) 3px no-repeat; }
.slider input::-webkit-slider-thumb { appearance: none; width: 15px; height: 15px; border-radius: 50%; background: #183d4e; }
.regenerate { width: 100%; height: 42px; margin-top: 31px; border-radius: 3px; background: #eee; font: 500 15px Roboto, sans-serif; text-transform: uppercase; }
.network { padding-left: 88px; }
.network-head { display: grid; grid-template-columns: 236px 1fr; }
.layers { padding-right: 69px; margin-top: -7px; }
.layers-title { display: flex; align-items: center; gap: 11px; padding-left: 170px; }
.layers-title h4 { margin-left: 3px; }
.count { font: 20px/28px Roboto, sans-serif; color: #222; margin-left: 8px; }
.round { width: 35px; height: 35px; border-radius: 50%; background: #eee; color: #555; }
.bracket { height: 6px; margin: 17px 19px 0 6px; border: 1px solid #c4c4c4; border-bottom: 0; }
.layer-row { display: flex; justify-content: space-between; margin-top: 15px; }
.layer { display: grid; grid-template-columns: 35px 35px; gap: 8px 6px; width: 76px; font: 15px/20px Roboto, sans-serif; color: #333; text-align: center; }
.layer span { grid-column: 1 / -1; white-space: nowrap; }
.diagram { display: block; width: 100%; overflow: visible; }
.diagram text { font: 16px "Liberation Sans", Arial, sans-serif; }
.diagram .callout text { font: italic 14px Roboto, sans-serif; fill: #777; }
.diagram .callout .b { font-weight: 700; }
.callout path { fill: none; stroke: #888; }
.callout .tip { fill: #666; }
.link { fill: none; stroke-dasharray: 11 1; }
.frame { fill: none; stroke: #000; stroke-width: 2; }
.cell { filter: drop-shadow(0 2px 2px rgba(0,0,0,.3)); }
.off { opacity: .4; }

/* output */
.loss { display: flex; justify-content: space-between; align-items: flex-start; height: 83px; white-space: nowrap; }
.loss div { padding-top: 10px; }
.loss span { display: block; line-height: 25px; }
.loss .test { color: #111; }
.loss svg { margin-top: 12px; }
.chart { position: relative; height: 350px; margin-top: 14px; }
.chart canvas { display: block; }
.chart svg { position: absolute; inset: 0; width: 345px; height: 350px; overflow: visible; }
.axis { font: 13px Roboto, sans-serif; fill: #bbb; }
.axis.zero { fill: #333; }
.dot { stroke: #fff; stroke-opacity: .9; stroke-width: 1.200; }
.legend { display: flex; justify-content: space-between; margin-top: 50px; padding-right: 17px; }
.legend p { line-height: 23px; white-space: nowrap; }
.scale { width: 181px; padding-top: 15px; font: 12px/16px Roboto, sans-serif; }
.bar { height: 13px; background: linear-gradient(90deg, #f59322, #e8eaeb, #0877bd); }
.marks { display: flex; justify-content: space-between; }
.marks i { width: 1px; height: 7px; background: #777; }
.nums { display: flex; justify-content: space-between; margin: 4px -4px 0; }
.checks { display: flex; gap: 28px; margin-top: 28px; white-space: nowrap; }
.checks label { display: flex; align-items: center; gap: 11px; }
.checks input { appearance: none; width: 20px; height: 20px; margin: 0; border: 2px solid #777; border-radius: 3px; }
.article { height: 36px; margin-top: auto; background: #fff; box-shadow: 0 -1px 3px rgba(0,0,0,.15); display: flex; justify-content: center; align-items: center; }
.more { width: 70px; height: 70px; margin: -35px 0 0; border-radius: 50%; background: #fff; box-shadow: 0 1px 3px rgba(0,0,0,.3); }

/* taskbar */
.taskbar { position: relative; display: flex; align-items: center; height: 60px; padding: 0 25px; background: #eee; border-top: 1px solid #bbb; color: #222; font-size: 14px; line-height: 20px; }
.taskbar span { display: block; }
.muted { color: #666; }
.weather { display: flex; align-items: center; gap: 7px; width: 290px; }
.weather > div { padding-bottom: 2px; }
.apps { display: flex; align-items: center; }
.search { display: flex; align-items: center; width: 273px; height: 40px; margin: 0 4px 0 16px; padding: 0 2px 0 14px; border: 1px solid #d2d2d2; border-radius: 20px; background: #fafafa; }
.search input { flex: 1; min-width: 0; border: 0; margin-left: 10px; padding: 0; background: none; font: 16px "Open Sans", "Noto Sans", sans-serif; }
.search input::placeholder { color: #666; }
.app { position: relative; width: 49px; height: 49px; margin: 0 3px; border-radius: 5px; }
.app.active { background: #f9f9f9; box-shadow: 0 0 1px #bbb; }
.app.active svg { margin-bottom: 6px; }
.app.active::after, .app.running::after { content: ""; position: absolute; bottom: 0; width: 8px; height: 4px; border-radius: 2px; background: #888; }
.app.active::after { width: 20px; background: #0078d4; }
.tray { display: flex; align-items: center; margin-left: auto; text-align: center; }
.lang { margin: 0 25px 0 26px; }
.status { display: flex; align-items: center; gap: 10px; }
.clock { text-align: right; margin: 0 11px 0 22px; }
.clock, .lang { padding-bottom: 2px; }
.copilot { margin-left: 22px; }
.badge-k { font: 600 12px "Open Sans", sans-serif; fill: #e4d9f5; }
.myhp { font: 9px "Open Sans", sans-serif; fill: #fff; }
.hp { font: italic bold 14px "Open Sans", sans-serif; }
.rs { font: 18px "Liberation Serif", serif; fill: #fff; }
.word { font: bold 11px "Open Sans", sans-serif; fill: #fff; }
.pre { font: bold 9px "Open Sans", sans-serif; fill: #222; }
```
FILE: script.js
```js
const NS = 'http://www.w3.org/2000/svg';
const ORANGE = '#f59322', BLUE = '#0877bd';
function el(parent, name, attrs, text) {
  const e = document.createElementNS(NS, name);
  for (const k in attrs) e.setAttribute(k, attrs[k]);
  if (text !== undefined) e.textContent = text;
  parent.appendChild(e);
  return e;
}
let seed = 7;
function rnd() { seed = (seed * 16807) % 2147483647; return seed / 2147483647; }
function normal() { return Math.sqrt(-2 * Math.log(rnd())) * Math.cos(2 * Math.PI * rnd()); }

/* network diagram */
const svg = document.getElementById('diagram');
const rows = [416, 485, 554, 622, 691, 760, 829];
const links = el(svg, 'g', {});
function link(x1, y1, x2, y2, w, color) {
  const m = (x1 + x2) / 2;
  el(links, 'path', { class: 'link', d: `M${x1} ${y1}C${m} ${y1} ${m} ${y2} ${x2} ${y2}`, stroke: color, 'stroke-width': w });
}
const stages = [
  { x1: 538, x2: 677, to: [431, 499, 568, 637], step: 7, w: [
    [[1.800, '#f1c48d'], [3.600, BLUE], [4.500, ORANGE], [1.500, '#ecd2b3']],
    [[2.500, '#f3ab55'], [2.500, '#4394c9'], [2.200, '#f1b26b'], [3.300, '#f59a30']]] },
  { x1: 721, x2: 957, to: [429.500, 498, 567, 635], step: 3.700, w: [
    [[1.800, '#f0c28f'], [2.600, '#4394c9'], [2, '#8cbcdb'], [1.200, '#dfe3e6']],
    [[4, BLUE], [5, ORANGE], [3, '#f3a040'], [1.200, '#e4e6e6']],
    [[4.500, ORANGE], [4.800, BLUE], [2, '#8cbcdb'], [1.200, '#e6e6e4']],
    [[2.200, '#f0c08a'], [2.300, '#7bb2d8'], [2.800, '#4c99cc'], [1.200, '#eae2d8']]] },
  { x1: 1001, x2: 1237, to: [429, 497.500], step: 4, w: [
    [[5.500, BLUE], [3.200, ORANGE]], [[6, ORANGE], [4, BLUE]],
    [[2.500, '#f2a655'], [2.700, '#3e90c8']], [[1.200, '#e8e2da'], [1.800, '#f0c594']]] },
  { x1: 1281, x2: 1368, to: [431], step: 8, w: [[[9, BLUE]], [[6, ORANGE]]] }
];
stages.forEach(s => s.w.forEach((row, i) => row.forEach((l, j) =>
  link(s.x1, rows[i] + 18.500, s.x2, s.to[j] + i * s.step, l[0], l[1]))));

const defs = el(svg, 'defs', {});
let gid = 0;
function gradient(nx, ny, stops) {
  const id = 'g' + gid++;
  const g = el(defs, 'linearGradient', { id, x1: .5 - nx / 2, y1: .5 - ny / 2, x2: .5 + nx / 2, y2: .5 + ny / 2 });
  stops.forEach(s => el(g, 'stop', { offset: s[0], 'stop-color': s[1] }));
  return `url(#${id})`;
}
function node(x, y, fill, w) {
  const g = el(svg, 'g', { class: 'cell' });
  el(g, 'rect', { x, y, width: w, height: 42, rx: 3, fill });
  el(g, 'rect', { class: 'frame', x: x + 1, y: y + 1, width: w - 2, height: 40, rx: 3 });
  el(g, 'path', { d: `M${x + w} ${y + 13}l5 5.500-5 5.500z`, fill: '#000' });
}
const B = '#5fa6d6', O = '#f7b872', W = '#f2f4f5', P = '#dde7ed';
const two = (a, b, s, e) => [[s, a], [e, b]];
node(495, 416, gradient(1, 0, [[.4, O], [.52, '#e8e4df'], [.62, B]]), 41);
node(495, 485, gradient(0, 1, [[.38, B], [.48, '#e8e4df'], [.6, O]]), 41);
[
  [677, 0, .5, -.87, two(B, W, .32, .68), '#d9e5ec'], [677, 1, .93, -.37, two(W, B, .3, .56), '#cfdfea'],
  [677, 2, .93, -.37, two(B, W, .42, .72), '#d5e2ea'], [677, 3, .25, -.97, two(B, W, .3, .68), '#d9e5ec'],
  [957, 0, .89, -.45, two(P, '#74b0da', .38, .58), '#9bc3de'], [957, 1, .89, -.45, two('#68abd7', P, .42, .66), '#f0cfa7'],
  [957, 2, .8, -.6, two('#7fb6db', '#c0d8e8', .42, .7), '#ebe6df'], [957, 3, 1, 0, two('#a4cae1', '#a4cae1', 0, 1), '#cfdfeb'],
  [1237, 0, .89, -.45, two(P, '#6eaedb', .42, .66), '#7db3d8'], [1237, 1, .85, -.52, two('#7ab3da', '#c0d8e8', .46, .66), '#ebdac6']
].forEach(n => {
  node(n[0], rows[n[1]], gradient(n[2], n[3], n[4]), 42);
  el(svg, 'rect', { x: n[0] - 9, y: rows[n[1]] + 35, width: 6, height: 6, fill: n[5] });
});

/* inputs that are switched off */
const b = '#5fa6d6', o = '#fbc994';
const stripes = [[0, b], [.2, b], [.28, W], [.34, o], [.46, o], [.52, W], [.6, b], [.68, b], [.78, W], [.85, o], [1, o]];
function off(i, fill) { return el(svg, 'rect', { class: 'off', x: 495, y: rows[i], width: 37, height: 37, rx: 3, fill }); }
off(2, gradient(1, 0, [[.3, b], [.45, '#a5cee0'], [.55, '#a5cee0'], [.7, b]]));
off(3, gradient(0, 1, [[.3, b], [.45, '#a5cee0'], [.55, '#a5cee0'], [.7, b]]));
off(4, b);
el(svg, 'path', { d: 'M498 691h15.500v18.500H495v-15.500a3 3 0 0 1 3-3zM513.500 709.500H532v15.500a3 3 0 0 1-3 3H513.500z', fill: '#fae1c6' });
el(svg, 'circle', { cx: 513.500, cy: 709.500, r: 4, fill: '#ece9e6' });
off(5, gradient(1, 0, stripes));
off(6, gradient(0, -1, stripes));

[['X', '1', '', 434, 1], ['X', '2', '', 503, 1], ['X', '1', '2', 572, 0], ['X', '2', '2', 641, 0]].forEach(f => {
  const t = el(svg, 'text', { x: 482, y: f[3] + 5, 'text-anchor': 'end', fill: f[4] ? '#333' : '#aaa' });
  el(t, 'tspan', {}, f[0]);
  el(t, 'tspan', { dy: 5, 'font-size': 12 }, f[1]);
  if (f[2]) el(t, 'tspan', { dy: -12, 'font-size': 12 }, f[2]);
});
const prod = el(svg, 'text', { x: 482, y: 714, 'text-anchor': 'end', fill: '#aaa' });
[['X', 0, 16], ['1', 5, 12], ['X', -5, 16], ['2', 5, 12]].forEach(p => el(prod, 'tspan', { dy: p[1], 'font-size': p[2] }, p[0]));
[['1', 782], ['2', 851]].forEach(f => {
  const t = el(svg, 'text', { x: 482, y: f[1], 'text-anchor': 'end', fill: '#aaa' });
  [['sin(X', 0, 16], [f[0], 5, 12], [')', -5, 16]].forEach(p => el(t, 'tspan', { dy: p[1], 'font-size': p[2] }, p[0]));
});

/* dataset thumbnails */
function dot(id, x, y, c) { el(document.getElementById(id), 'rect', { x: Math.round(x), y: Math.round(y), width: 2, height: 2, fill: c }); }
for (let i = 0; i < 110; i++) {
  const a = rnd() * 6.283, r = 13 + rnd() * 4;
  dot('ds-circle', 21 + r * Math.cos(a), 21 + r * Math.sin(a), ORANGE);
  const q = rnd() * 8;
  dot('ds-circle', 21 + q * Math.cos(a * 3), 21 + q * Math.sin(a * 3), BLUE);
  dot('ds-gauss', 14 + normal() * 2.500, 13 + normal() * 2.400, ORANGE);
  dot('ds-gauss', 28 + normal() * 2.300, 27 + normal() * 2.600, BLUE);
}
for (let i = 0; i < 200; i++) {
  const x = (rnd() - .5) * 36, y = (rnd() - .5) * 36;
  if (Math.abs(x) > 1.500 && Math.abs(y) > 1.500) dot('ds-xor', 22 + x, 20 + y, x * y > 0 ? BLUE : ORANGE);
}
for (let i = 0; i < 130; i++) {
  const r = i / 130 * 18, t = 1.750 * i / 130 * 2 * Math.PI;
  dot('ds-spiral', 22 - r * Math.sin(t), 20 - r * Math.cos(t) * .9, BLUE);
  dot('ds-spiral', 22 + r * Math.sin(t), 20 + r * Math.cos(t) * .9, ORANGE);
}

/* output heat map: colour by horizontal distance from the decision boundary */
const ctx = document.getElementById('heat').getContext('2d');
const ramp = [[-400, 245, 181, 110], [-110, 245, 183, 114], [-50, 244, 188, 124], [-25, 243, 197, 144], [-13, 240, 212, 180], [-5, 236, 226, 216], [0, 234, 236, 239], [8, 200, 221, 235], [17, 155, 198, 225], [30, 125, 181, 218], [60, 109, 172, 214], [150, 98, 166, 212], [400, 93, 164, 212]];
const img = ctx.createImageData(325, 325);
for (let y = 0; y < 325; y++) {
  const edge = 64 + .583 * y + .000222 * y * y;
  const spread = 1 + Math.pow((y - 165) / 165, 2) * .9;
  for (let x = 0; x < 325; x++) {
    const d = (x - edge) / spread;
    let k = 1;
    while (k < ramp.length - 1 && ramp[k][0] < d) k++;
    const p = ramp[k - 1], q = ramp[k], f = (d - p[0]) / (q[0] - p[0]);
    for (let c = 0; c < 3; c++) img.data[(y * 325 + x) * 4 + c] = p[c + 1] + (q[c + 1] - p[c + 1]) * f;
    img.data[(y * 325 + x) * 4 + 3] = 255;
  }
}
ctx.putImageData(img, 0, 0);

const plot = document.getElementById('plot');
for (let v = -6; v <= 6; v++) {
  const px = (v + 6) * 325 / 12, py = 325 - px, z = v === 0, c = z ? '#666' : '#d0d0d0';
  el(plot, 'path', { d: `M${px} 325v7M325 ${py}h7`, stroke: c });
  el(plot, 'text', { class: 'axis' + (z ? ' zero' : ''), x: px, y: 345, 'text-anchor': 'middle' }, v);
  el(plot, 'text', { class: 'axis' + (z ? ' zero' : ''), x: 336, y: py + 4 }, v);
}
const bluePts = '799,553 689,607 750,639 633,649 788,660 897,671 656,675 707,662 729,657 720,672 745,673 767,682 754,692 689,693 672,702 653,719 692,713 676,730 752,711 770,714 793,703 797,697 813,716 806,722 840,723 820,733 857,742 859,750 862,786 734,727 695,738 717,741 656,745 675,750 695,753 733,747 769,750 793,747 815,750 778,735 643,768 651,777 676,771 705,768 729,775 751,768 762,760 795,773 811,771 784,788 760,787 729,793 741,794 703,793 681,803 670,808 766,804 787,802 822,793 829,789 701,816 721,825 737,828 744,817 796,826 812,825 633,843 662,842 682,842 768,851 798,849 757,878 750,803 680,760 728,757';
const orangePts = '252,928 399,935 480,930 476,940 451,952 443,970 317,986 368,982 394,980 392,992 470,980 487,980 525,990 460,1000 339,1010 371,1005 380,1020 402,1010 433,1013 437,1006 452,1021 467,1029 324,1027 353,1034 310,1040 295,1052 316,1060 335,1068 408,1030 419,1036 436,1040 448,1046 503,1032 510,1036 544,1028 501,1052 531,1061 470,1060 498,1062 386,1060 398,1065 375,1069 408,1068 428,1068 442,1076 463,1078 370,1080 385,1083 297,1094 302,1110 328,1092 331,1110 351,1103 372,1096 369,1113 397,1103 399,1088 412,1095 424,1089 443,1091 468,1092 482,1098 490,1103 437,1105 458,1113 442,1122 411,1113 383,1121 396,1121 424,1121 461,1130 477,1116 402,1137 388,1139 422,1147 326,1154 342,1170 375,1156 404,1156 398,1164 450,1152 461,1153 474,1150 504,1131 530,1136 478,1200 240,1187 366,1120 413,1056 405,1047';
function points(list, fill) {
  list.split(' ').forEach(p => {
    const [x, y] = p.split(',').map(Number);
    el(plot, 'circle', { class: 'dot', cx: (x - 84) / 3, cy: (y - 420) / 3, r: 3.800, fill });
  });
}
points(orangePts, ORANGE);
points(bluePts, BLUE);
```
